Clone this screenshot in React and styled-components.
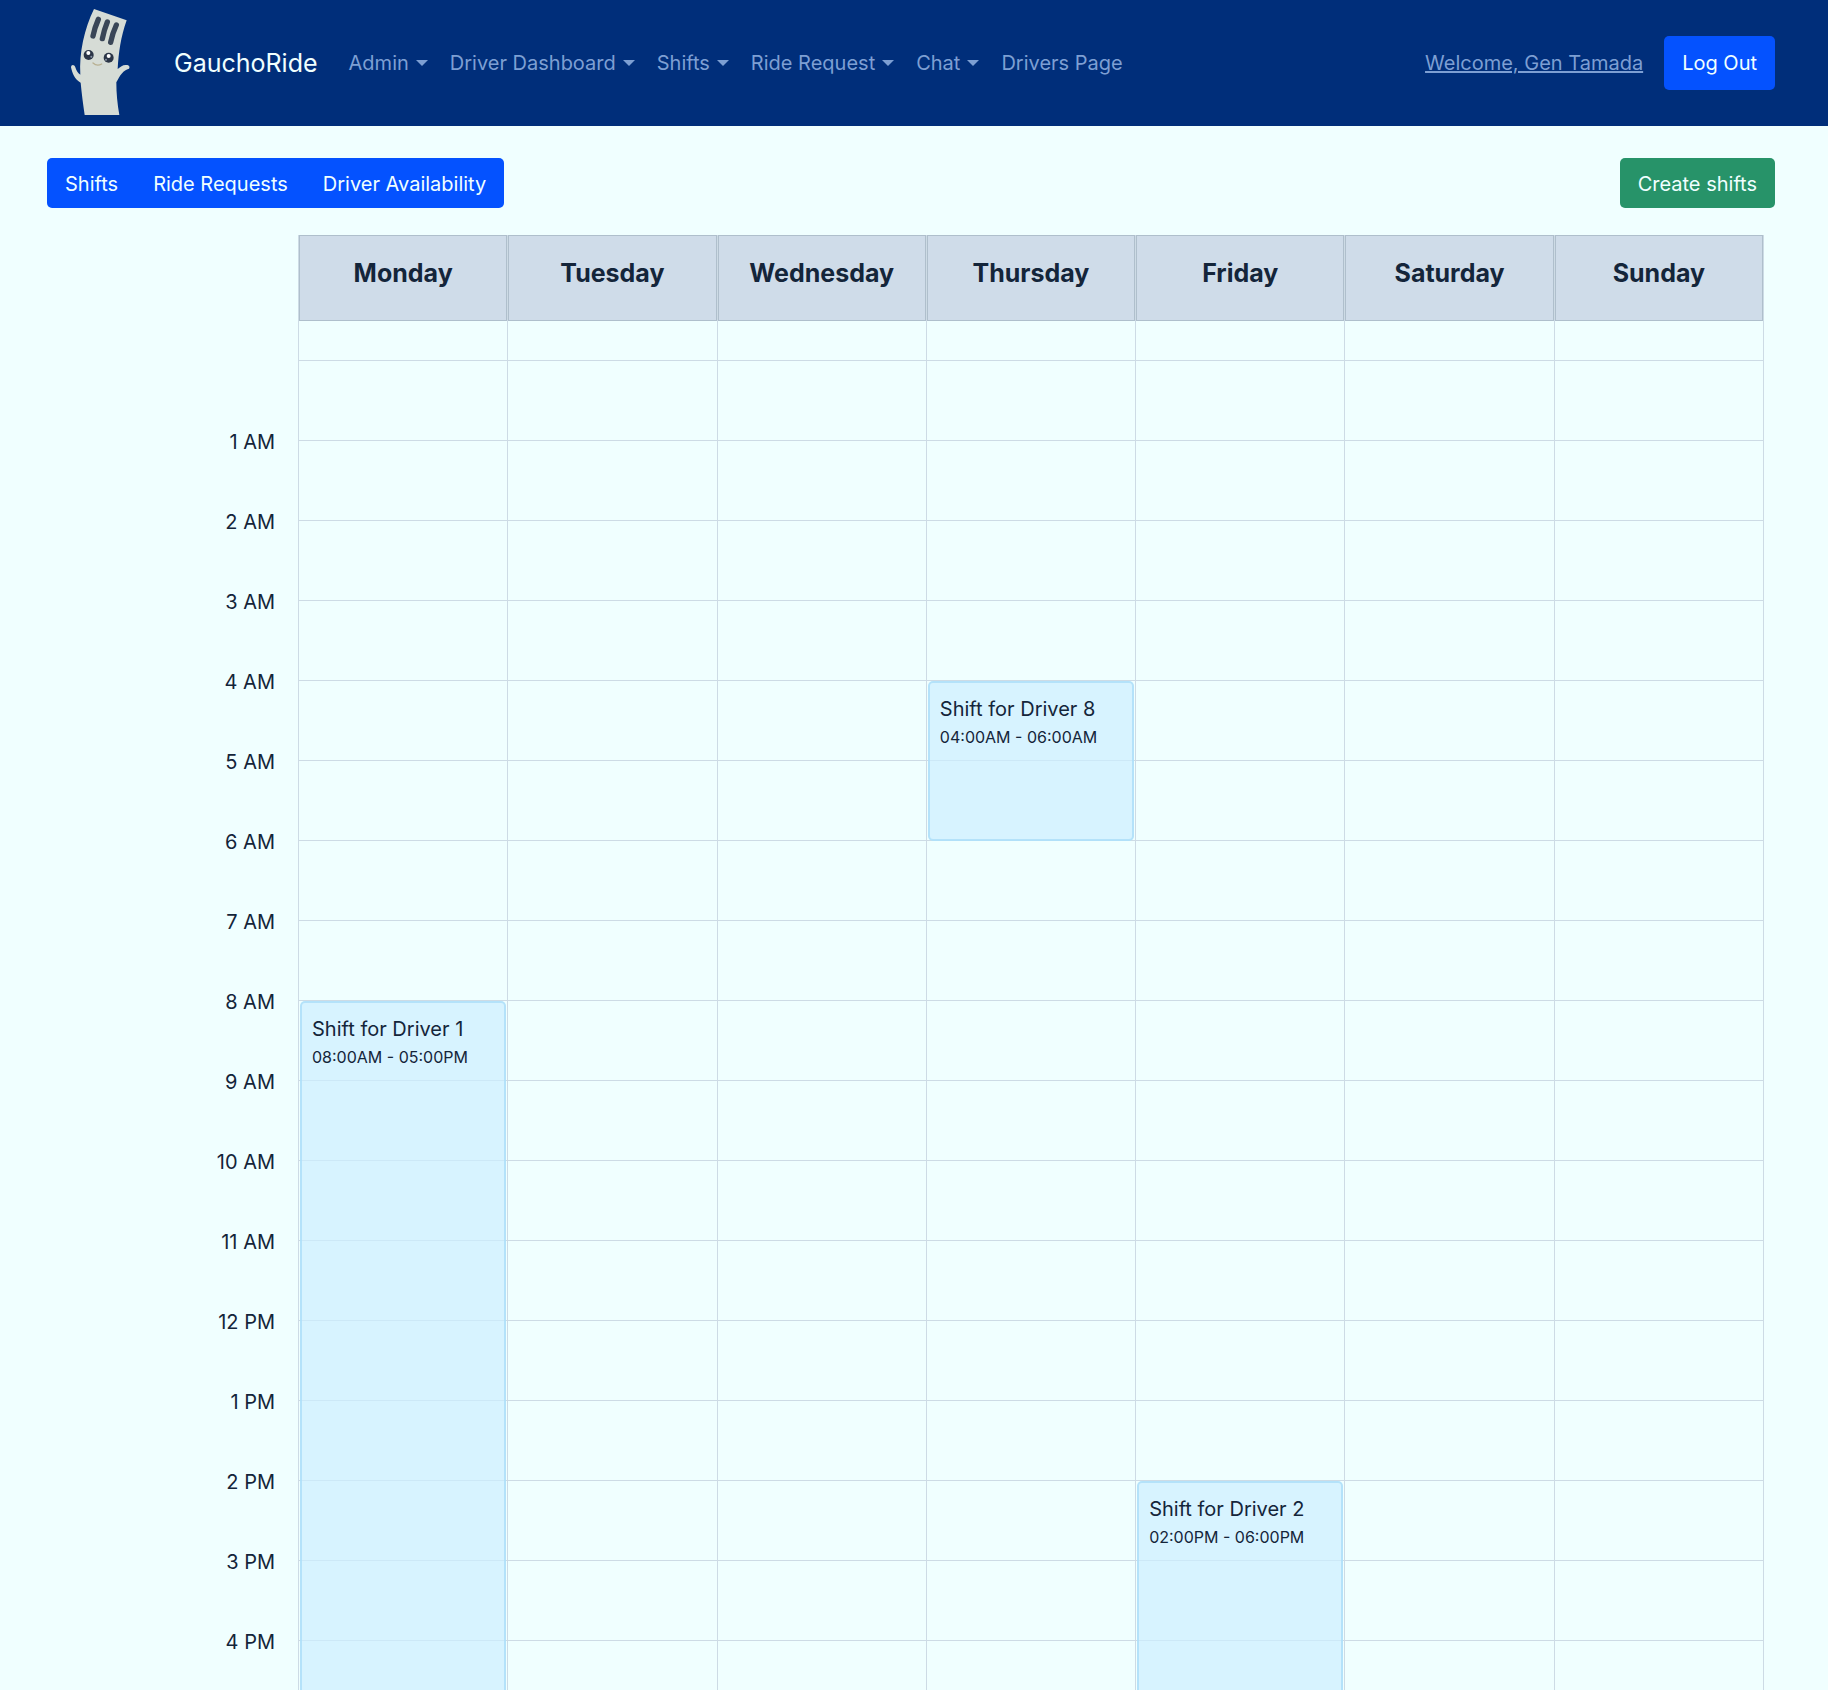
import React from "react";
import styled, { createGlobalStyle } from "styled-components";

const HOUR = 80;
const LAST_HOUR = 16;

const GlobalStyle = createGlobalStyle`
  *, *::before, *::after { box-sizing: border-box; }
  body {
    margin: 0;
    background: #f0ffff;
    color: #14253a;
    font-family: Inter, "Liberation Sans", sans-serif;
    font-size: 20px;
    line-height: 32px;
  }
  button { font: inherit; border: 0; margin: 0; cursor: pointer; }
`;

const Page = styled.div`
  display: flex;
  flex-direction: column;
  height: 100vh;
`;

const Navbar = styled.header`
  flex: none;
  display: flex;
  align-items: center;
  height: 126px;
  padding: 0 53px 0 47px;
  background: #002e7a;
  white-space: nowrap;
`;

const Logo = styled.svg`
  flex: none;
  width: 107px;
  height: 107px;
  overflow: visible;
`;

const Brand = styled.a`
  display: flex;
  align-items: center;
  gap: 20px;
  margin-right: 20px;
  color: #f0ffff;
  font-size: 25px;
  text-decoration: none;
`;

const NavLinks = styled.nav`
  display: flex;
  flex: 1;
`;

const NavToggle = styled.button`
  display: flex;
  align-items: center;
  gap: 7px;
  padding: 10px 11px;
  background: none;
  color: #7d9fd3;

  &::after {
    content: "";
    border: 6px solid transparent;
    border-top-color: currentColor;
    border-bottom: 0;
  }
`;

const NavLink = styled.a`
  padding: 10px 11px;
  color: #7d9fd3;
  text-decoration: none;
`;

const UserLink = styled.a`
  margin-right: 21px;
  color: #7d9fd3;
  text-decoration: underline;
`;

const Button = styled.button`
  padding: ${(p) => (p.$tall ? 11 : 9)}px 18px;
  border-radius: 5px;
  background: ${(p) => (p.$success ? "#279369" : "#0452ff")};
  color: #f0ffff;
`;

const Content = styled.main`
  flex: 1;
  min-height: 0;
  overflow-y: auto;
  scrollbar-width: none;
  padding: 32px 53px 0 47px;
`;

const Toolbar = styled.div`
  display: flex;
  justify-content: space-between;
  margin-bottom: 27px;

  button { padding-top: 10px; padding-bottom: 8px; }
`;

const ButtonGroup = styled.div`
  display: flex;
  border-radius: 5px;
  overflow: hidden;

  button { border-radius: 0; }
  button + button { padding-left: 17px; }
`;

const Calendar = styled.section`
  display: flex;
  padding-right: 11px;
`;

const TimeColumn = styled.div`
  flex: none;
  width: 251px;
  padding: 167px 23px 0 0;
  text-align: right;
`;

const TimeLabel = styled.div`
  height: ${HOUR}px;
  line-height: ${HOUR}px;
`;

const Days = styled.div`
  flex: 1;
  display: grid;
  grid-template-columns: repeat(7, minmax(0, 1fr));
  border-right: 1px solid #cddbe5;
`;

const Day = styled.div`
  border-left: 1px solid #cddbe5;
`;

const DayTitle = styled.h2`
  height: 86px;
  margin: 0;
  padding-top: 21px;
  border: 1px solid #afbfcc;
  background: #cfdce9;
  font-size: 25px;
  font-weight: 700;
  text-align: center;
`;

const DayBody = styled.div`
  position: relative;
  overflow: hidden;
`;

const Slot = styled.div`
  height: ${(p) => (p.$half ? HOUR / 2 : HOUR)}px;
  border-bottom: 1px solid #cddbe5;
`;

const Shift = styled.article`
  position: absolute;
  left: 1px;
  right: 1px;
  top: ${(p) => HOUR / 2 + p.$start * HOUR}px;
  height: ${(p) => (p.$end - p.$start) * HOUR}px;
  padding: 10px;
  border: 2px solid rgba(170, 223, 249, 0.8);
  border-radius: 5px;
  background: rgba(204, 238, 255, 0.7);
`;

const ShiftName = styled.div`
  font-size: 20px;
`;

const ShiftTime = styled.div`
  font-size: 16px;
  line-height: 24px;
`;

const menus = ["Admin", "Driver Dashboard", "Shifts", "Ride Request", "Chat"];
const days = ["Monday", "Tuesday", "Wednesday", "Thursday", "Friday", "Saturday", "Sunday"];
const shifts = [
  { day: "Monday", driver: 1, start: 8, end: 17 },
  { day: "Thursday", driver: 8, start: 4, end: 6 },
  { day: "Friday", driver: 2, start: 14, end: 18 },
];
const hours = Array.from({ length: LAST_HOUR }, (_, i) => i + 1);

const label = (h) => `${h % 12 || 12} ${h < 12 ? "AM" : "PM"}`;
const clock = (h) => `${String(h % 12 || 12).padStart(2, "0")}:00${h < 12 ? "AM" : "PM"}`;

function Mascot() {
  return (
    <Logo viewBox="21 30 321 321" aria-hidden="true">
      <path
        d="M162 27 L260 61 C242 112 236 158 233 207 C242 201 247 195 257 195 C267 194 271 200 267 206 C250 210 240 226 229 247 C229 280 232 312 238 345 L134 345 C129 310 125 281 122 248 C104 238 97 221 93 202 C94 192 103 193 106 202 C109 212 113 219 121 224 C117 160 133 85 162 27 Z"
        fill="#d6dcd6"
      />
      <g stroke="#3a4657" strokeWidth="16" strokeLinecap="round">
        <path d="M175 58 Q164 83 159 108" fill="none" />
        <path d="M202 66 Q192 90 187 116" fill="none" />
        <path d="M229 75 Q217 101 212 127" fill="none" />
      </g>
      <circle cx="146" cy="165" r="15" fill="#2b3547" />
      <circle cx="206" cy="173" r="15" fill="#2b3547" />
      <circle cx="145" cy="159" r="6" fill="#fff" />
      <circle cx="206" cy="168" r="6" fill="#fff" />
      <circle cx="154" cy="170" r="3" fill="#8995a5" />
      <circle cx="198" cy="179" r="3" fill="#8995a5" />
      <path d="M159 189 Q171 200 185 192" fill="none" stroke="#b8b092" strokeWidth="4" strokeLinecap="round" />
    </Logo>
  );
}

export default function App() {
  return (
    <Page>
      <GlobalStyle />
      <Navbar>
        <Brand href="#">
          <Mascot />
          GauchoRide
        </Brand>
        <NavLinks aria-label="Main">
          {menus.map((m) => (
            <NavToggle key={m} type="button" aria-haspopup="true">{m}</NavToggle>
          ))}
          <NavLink href="#drivers">Drivers Page</NavLink>
        </NavLinks>
        <UserLink href="#profile">Welcome, Gen Tamada</UserLink>
        <Button type="button" $tall>Log Out</Button>
      </Navbar>
      <Content>
        <Toolbar>
          <ButtonGroup role="group" aria-label="View">
            <Button type="button">Shifts</Button>
            <Button type="button">Ride Requests</Button>
            <Button type="button">Driver Availability</Button>
          </ButtonGroup>
          <Button type="button" $success>Create shifts</Button>
        </Toolbar>
        <Calendar aria-label="Weekly shifts">
          <TimeColumn>
            {hours.map((h) => <TimeLabel key={h}>{label(h)}</TimeLabel>)}
          </TimeColumn>
          <Days>
            {days.map((day) => (
              <Day key={day}>
                <DayTitle>{day}</DayTitle>
                <DayBody>
                  <Slot $half />
                  {hours.map((h) => <Slot key={h} />)}
                  <Slot />
                  {shifts.filter((s) => s.day === day).map((s) => (
                    <Shift key={s.driver} $start={s.start} $end={s.end}>
                      <ShiftName>Shift for Driver {s.driver}</ShiftName>
                      <ShiftTime>{clock(s.start)} - {clock(s.end)}</ShiftTime>
                    </Shift>
                  ))}
                </DayBody>
              </Day>
            ))}
          </Days>
        </Calendar>
      </Content>
    </Page>
  );
}
